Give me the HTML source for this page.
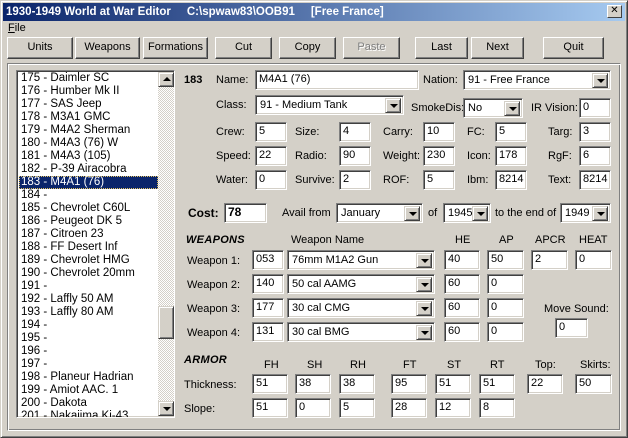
<!DOCTYPE html>
<html><head><meta charset="utf-8"><style>
*{box-sizing:border-box;margin:0;padding:0}
body{width:628px;height:438px;overflow:hidden;background:#d4d0c8;font-family:"Liberation Sans",Arial,sans-serif;font-size:11px;color:#000;position:relative}
div,span{position:absolute}
.win{left:0;top:0;width:628px;height:438px;border:1px solid;border-color:#d4d0c8 #404040 #404040 #d4d0c8;box-shadow:inset 1px 1px #fff,inset -1px -1px #808080}
.title{left:3px;top:3px;width:622px;height:18px;background:linear-gradient(90deg,#0a246a,#a6caf0);color:#fff;font-weight:bold;font-size:11.5px;line-height:18px;padding-left:3px;white-space:pre}
.x{right:3px;top:2px;width:15px;height:13px;background:#d4d0c8;border:1px solid;border-color:#fff #404040 #404040 #fff;color:#000;font-size:10px;line-height:10px;text-align:center;font-weight:normal}
.btn{top:37px;height:22px;border:1px solid;border-color:#fff #404040 #404040 #fff;box-shadow:inset -1px -1px #808080;text-align:center;line-height:19px;font-size:11px}
.grp{left:7px;top:63px;width:614px;height:368px;border:1px solid;border-color:#808080 #fff #fff #808080;box-shadow:inset 1px 1px #fff,inset -1px -1px #808080}
.e{height:20px;background:#fff;border:1px solid;border-color:#808080 #fff #fff #808080;box-shadow:inset 1px 1px #404040,inset -1px -1px #d4d0c8;padding-left:3px;line-height:17px;font-size:11px;overflow:hidden}
.c{height:20px;background:#fff;border:1px solid;border-color:#808080 #fff #fff #808080;box-shadow:inset 1px 1px #404040,inset -1px -1px #d4d0c8;padding-left:4px;line-height:18px;font-size:11px}
.c i,.sb{position:absolute;right:2px;top:2px;width:16px;height:15px;background:#d4d0c8;border:1px solid;border-color:#d4d0c8 #404040 #404040 #d4d0c8;box-shadow:inset 1px 1px #fff,inset -1px -1px #808080}
.c i:after,.sb:after{content:"";position:absolute;left:4px;top:5px;border-left:4px solid transparent;border-right:4px solid transparent;border-top:4px solid #000}
.sb.up:after{border-top:0;border-bottom:4px solid #000;top:4px}
.sb.th:after{display:none}
.l{height:20px;line-height:20px;font-size:11px;white-space:nowrap}
.h{font-weight:bold;font-style:italic;font-size:11px;letter-spacing:0.3px}
.list{left:16px;top:70px;width:159px;height:348px;background:#fff;border:1px solid;border-color:#808080 #fff #fff #808080;box-shadow:inset 1px 1px #404040,inset -1px -1px #d4d0c8;overflow:hidden}
.it{left:2px;width:140px;height:13px;line-height:13px;font-size:11.5px;padding-left:2px;white-space:nowrap}
.sel{background:#0a246a;color:#fff;outline:1px dotted #e0c060;outline-offset:-1px}
.trk{left:141px;top:1px;width:16px;height:344px;background:repeating-conic-gradient(#fff 0 25%,#d4d0c8 0 50%) 0 0/2px 2px}
</style></head><body>
<div class="win"></div>
<div class="title">1930-1949 World at War Editor     C:\spwaw83\OOB91     [Free France]<span class="x">✕</span></div>
<div class="l" style="left:8px;top:18px"><u>F</u>ile</div>
<div class="btn" style="left:7px;width:66px">Units</div>
<div class="btn" style="left:75px;width:65px">Weapons</div>
<div class="btn" style="left:143px;width:65px">Formations</div>
<div class="btn" style="left:215px;width:57px">Cut</div>
<div class="btn" style="left:279px;width:57px">Copy</div>
<div class="btn" style="left:343px;width:57px;color:#808080;text-shadow:1px 1px #fff">Paste</div>
<div class="btn" style="left:415px;width:53px">Last</div>
<div class="btn" style="left:471px;width:53px">Next</div>
<div class="btn" style="left:543px;width:61px">Quit</div>
<div class="grp"></div>

<div class="list">
<div class="it" style="top:1px">175 - Daimler SC</div>
<div class="it" style="top:14px">176 - Humber Mk II</div>
<div class="it" style="top:27px">177 - SAS Jeep</div>
<div class="it" style="top:40px">178 - M3A1 GMC</div>
<div class="it" style="top:53px">179 - M4A2 Sherman</div>
<div class="it" style="top:66px">180 - M4A3 (76) W</div>
<div class="it" style="top:79px">181 - M4A3 (105)</div>
<div class="it" style="top:92px">182 - P-39 Airacobra</div>
<div class="it sel" style="top:105px;width:139px">183 - M4A1 (76)</div>
<div class="it" style="top:118px">184 -</div>
<div class="it" style="top:131px">185 - Chevrolet C60L</div>
<div class="it" style="top:144px">186 - Peugeot DK 5</div>
<div class="it" style="top:157px">187 - Citroen 23</div>
<div class="it" style="top:170px">188 - FF Desert Inf</div>
<div class="it" style="top:183px">189 - Chevrolet HMG</div>
<div class="it" style="top:196px">190 - Chevrolet 20mm</div>
<div class="it" style="top:209px">191 -</div>
<div class="it" style="top:222px">192 - Laffly 50 AM</div>
<div class="it" style="top:235px">193 - Laffly 80 AM</div>
<div class="it" style="top:248px">194 -</div>
<div class="it" style="top:261px">195 -</div>
<div class="it" style="top:274px">196 -</div>
<div class="it" style="top:287px">197 -</div>
<div class="it" style="top:300px">198 - Planeur Hadrian</div>
<div class="it" style="top:313px">199 - Amiot AAC. 1</div>
<div class="it" style="top:326px">200 - Dakota</div>
<div class="it" style="top:339px">201 - Nakajima Ki-43</div>
<div class="trk"></div>
<div class="sb up" style="left:141px;top:1px;right:auto"></div>
<div class="sb th" style="left:141px;top:235px;height:33px;right:auto"></div>
<div class="sb" style="left:141px;top:330px;right:auto"></div>
</div>

<div class="l" style="left:184px;top:70px;font-weight:bold">183</div>
<div class="l" style="left:216px;top:70px">Name:</div>
<div class="e" style="left:255px;top:70px;width:164px">M4A1 (76)</div>
<div class="l" style="left:423px;top:70px">Nation:</div>
<div class="c" style="left:463px;top:70px;width:148px">91 - Free France<i></i></div>

<div class="l" style="left:216px;top:95px">Class:</div>
<div class="c" style="left:255px;top:95px;width:149px">91 - Medium Tank<i></i></div>
<div class="l" style="left:411px;top:98px">SmokeDis:</div>
<div class="c" style="left:463px;top:98px;width:60px">No<i></i></div>
<div class="l" style="left:531px;top:98px">IR Vision:</div>
<div class="e" style="left:579px;top:98px;width:32px">0</div>

<div class="l" style="left:216px;top:122px">Crew:</div><div class="e" style="left:255px;top:122px;width:32px">5</div>
<div class="l" style="left:295px;top:122px">Size:</div><div class="e" style="left:339px;top:122px;width:32px">4</div>
<div class="l" style="left:383px;top:122px">Carry:</div><div class="e" style="left:423px;top:122px;width:32px">10</div>
<div class="l" style="left:467px;top:122px">FC:</div><div class="e" style="left:495px;top:122px;width:32px">5</div>
<div class="l" style="left:548px;top:122px">Targ:</div><div class="e" style="left:579px;top:122px;width:32px">3</div>

<div class="l" style="left:216px;top:146px">Speed:</div><div class="e" style="left:255px;top:146px;width:32px">22</div>
<div class="l" style="left:295px;top:146px">Radio:</div><div class="e" style="left:339px;top:146px;width:32px">90</div>
<div class="l" style="left:383px;top:146px">Weight:</div><div class="e" style="left:423px;top:146px;width:32px">230</div>
<div class="l" style="left:467px;top:146px">Icon:</div><div class="e" style="left:495px;top:146px;width:32px">178</div>
<div class="l" style="left:548px;top:146px">RgF:</div><div class="e" style="left:579px;top:146px;width:32px">6</div>

<div class="l" style="left:216px;top:170px">Water:</div><div class="e" style="left:255px;top:170px;width:32px">0</div>
<div class="l" style="left:295px;top:170px">Survive:</div><div class="e" style="left:339px;top:170px;width:32px">2</div>
<div class="l" style="left:383px;top:170px">ROF:</div><div class="e" style="left:423px;top:170px;width:32px">5</div>
<div class="l" style="left:467px;top:170px">Ibm:</div><div class="e" style="left:495px;top:170px;width:32px">8214</div>
<div class="l" style="left:548px;top:170px">Text:</div><div class="e" style="left:579px;top:170px;width:32px">8214</div>

<div class="l" style="left:188px;top:203px;font-weight:bold;font-size:12px">Cost:</div>
<div class="e" style="left:224px;top:203px;width:43px;font-weight:bold;font-size:12px">78</div>
<div class="l" style="left:282px;top:203px">Avail from</div>
<div class="c" style="left:336px;top:203px;width:87px">January<i></i></div>
<div class="l" style="left:428px;top:203px">of</div>
<div class="c" style="left:443px;top:203px;width:48px">1945<i></i></div>
<div class="l" style="left:495px;top:203px">to the end of</div>
<div class="c" style="left:560px;top:203px;width:51px">1949<i></i></div>

<div class="l h" style="left:186px;top:230px">WEAPONS</div>
<div class="l" style="left:291px;top:230px">Weapon Name</div>
<div class="l" style="left:455px;top:230px">HE</div>
<div class="l" style="left:499px;top:230px">AP</div>
<div class="l" style="left:535px;top:230px">APCR</div>
<div class="l" style="left:579px;top:230px">HEAT</div>

<div class="l" style="left:187px;top:251px">Weapon 1:</div><div class="e" style="left:252px;top:250px;width:32px">053</div>
<div class="c" style="left:287px;top:250px;width:148px">76mm M1A2 Gun<i></i></div>
<div class="e" style="left:444px;top:250px;width:36px">40</div><div class="e" style="left:487px;top:250px;width:37px">50</div>
<div class="e" style="left:531px;top:250px;width:37px">2</div><div class="e" style="left:575px;top:250px;width:37px">0</div>

<div class="l" style="left:187px;top:275px">Weapon 2:</div><div class="e" style="left:252px;top:274px;width:32px">140</div>
<div class="c" style="left:287px;top:274px;width:148px">50 cal AAMG<i></i></div>
<div class="e" style="left:444px;top:274px;width:36px">60</div><div class="e" style="left:487px;top:274px;width:37px">0</div>

<div class="l" style="left:187px;top:299px">Weapon 3:</div><div class="e" style="left:252px;top:298px;width:32px">177</div>
<div class="c" style="left:287px;top:298px;width:148px">30 cal CMG<i></i></div>
<div class="e" style="left:444px;top:298px;width:36px">60</div><div class="e" style="left:487px;top:298px;width:37px">0</div>

<div class="l" style="left:187px;top:323px">Weapon 4:</div><div class="e" style="left:252px;top:322px;width:32px">131</div>
<div class="c" style="left:287px;top:322px;width:148px">30 cal BMG<i></i></div>
<div class="e" style="left:444px;top:322px;width:36px">60</div><div class="e" style="left:487px;top:322px;width:37px">0</div>

<div class="l" style="left:544px;top:299px">Move Sound:</div>
<div class="e" style="left:555px;top:318px;width:33px">0</div>

<div class="l h" style="left:184px;top:350px">ARMOR</div>
<div class="l" style="left:264px;top:355px">FH</div>
<div class="l" style="left:307px;top:355px">SH</div>
<div class="l" style="left:350px;top:355px">RH</div>
<div class="l" style="left:403px;top:355px">FT</div>
<div class="l" style="left:447px;top:355px">ST</div>
<div class="l" style="left:490px;top:355px">RT</div>
<div class="l" style="left:535px;top:355px">Top:</div>
<div class="l" style="left:580px;top:355px">Skirts:</div>

<div class="l" style="left:184px;top:375px">Thickness:</div>
<div class="e" style="left:252px;top:374px;width:36px">51</div>
<div class="e" style="left:295px;top:374px;width:36px">38</div>
<div class="e" style="left:339px;top:374px;width:36px">38</div>
<div class="e" style="left:391px;top:374px;width:36px">95</div>
<div class="e" style="left:435px;top:374px;width:36px">51</div>
<div class="e" style="left:479px;top:374px;width:36px">51</div>
<div class="e" style="left:527px;top:374px;width:36px">22</div>
<div class="e" style="left:575px;top:374px;width:37px">50</div>

<div class="l" style="left:184px;top:399px">Slope:</div>
<div class="e" style="left:252px;top:398px;width:36px">51</div>
<div class="e" style="left:295px;top:398px;width:36px">0</div>
<div class="e" style="left:339px;top:398px;width:36px">5</div>
<div class="e" style="left:391px;top:398px;width:36px">28</div>
<div class="e" style="left:435px;top:398px;width:36px">12</div>
<div class="e" style="left:479px;top:398px;width:36px">8</div>
</body></html>
